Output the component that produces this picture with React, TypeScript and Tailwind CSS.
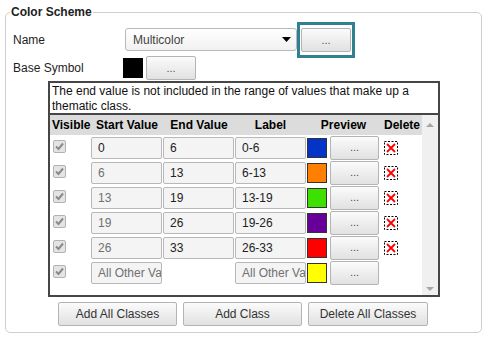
import React from "react";

type ClassRow = {
  start: string;
  end: string | null;
  label: string;
  color: string;
  canDelete: boolean;
  startLocked: boolean;
};

const classes: ClassRow[] = [
  { start: "0", end: "6", label: "0-6", color: "#0433c8", canDelete: true, startLocked: false },
  { start: "6", end: "13", label: "6-13", color: "#ff8000", canDelete: true, startLocked: true },
  { start: "13", end: "19", label: "13-19", color: "#3ee000", canDelete: true, startLocked: true },
  { start: "19", end: "26", label: "19-26", color: "#660099", canDelete: true, startLocked: true },
  { start: "26", end: "33", label: "26-33", color: "#ff0000", canDelete: true, startLocked: true },
  { start: "All Other Values", end: null, label: "All Other Values", color: "#ffff00", canDelete: false, startLocked: true },
];

const buttonClass =
  "flex items-center justify-center rounded-[2px] border border-[#b4b4b4] bg-linear-to-b from-[#fbfbfb] to-[#e1e1e1] text-[#333] shrink-0";

const fieldClass =
  "h-[22px] shrink-0 overflow-hidden whitespace-nowrap rounded-[2px] border border-[#b8b8b8] bg-[#f4f4f4] pl-[6px] leading-[20px]";

function Checkbox() {
  return (
    <svg width="13" height="13" viewBox="0 0 13 13">
      <rect x="0.5" y="0.5" width="12" height="12" rx="1.5" fill="#e4e4e4" stroke="#b2b2b2" />
      <path d="M3 6.5 L5.5 9 L10 3.5" fill="none" stroke="#8a8a8a" strokeWidth="2" />
    </svg>
  );
}

function DeleteIcon() {
  return (
    <svg width="14" height="14" viewBox="0 0 14 14">
      <rect x="0.5" y="0.5" width="13" height="13" fill="none" stroke="#000" strokeDasharray="2 1.5" />
      <path d="M3 3 L11 11 M11 3 L3 11" stroke="#ff0000" strokeWidth="1.8" />
    </svg>
  );
}

function DotsButton({ className }: { className: string }) {
  return <div className={`${buttonClass} ${className} text-[11px] text-[#555]`}>...</div>;
}

export default function App() {
  return (
    <div className="h-[339px] w-[483px] bg-white pl-[5px] pt-[12px] font-['Liberation_Sans',Arial,sans-serif] text-[12px] text-[#1e1e1e]">
      <div className="h-[321px] w-[477px] rounded-[5px] border border-[#cfcfcf]">
        <div className="-mt-[9px] ml-[4px] w-fit bg-white px-[1px] font-bold leading-[16px] text-[#222]">
          Color Scheme
        </div>

        {/* name row */}
        <div className="mt-[2px] flex h-[34px] items-start pl-[7px]">
          <div className="w-[112px] pt-[11px] leading-[14px]">Name</div>
          <div className="mt-[6px] flex h-[23px] w-[172px] shrink-0 items-center justify-between rounded-[3px] border border-[#b9b9b9] bg-linear-to-b from-white to-[#f1f1f1] pl-[7px] pr-[5px] text-[#444]">
            <span>Multicolor</span>
            <svg width="9" height="5" viewBox="0 0 9 5">
              <path d="M0 0 H9 L4.5 5 Z" fill="#000" />
            </svg>
          </div>
          <div className="flex h-[36px] w-[58px] shrink-0 items-center justify-center border-[3px] border-[#2f8191]">
            <DotsButton className="h-[24px] w-[50px]" />
          </div>
        </div>

        {/* base symbol row */}
        <div className="flex h-[24px] items-center pl-[7px]">
          <div className="w-[110px]">Base Symbol</div>
          <div className="h-[20px] w-[20px] shrink-0 bg-black" />
          <DotsButton className="ml-[3px] h-[24px] w-[50px]" />
        </div>

        {/* classes table */}
        <div className="ml-[42px] mt-[1px] flex h-[216px] w-[392px] flex-col border-2 border-[#464646]">
          <div className="h-[30px] px-[2px] pt-[1px] leading-[15px] text-[#111]">
            The end value is not included in the range of values that make up a thematic class.
          </div>
          <div className="h-[2px] bg-[#464646]" />
          <div className="flex flex-1">
            <div className="w-[372px]">
              <div className="flex h-[20px] items-center bg-[#dcdcdc] font-bold text-black">
                <div className="w-[41px] pl-[2px]">Visible</div>
                <div className="w-[72px] text-center">Start Value</div>
                <div className="w-[72px] text-center">End Value</div>
                <div className="w-[71px] text-center">Label</div>
                <div className="w-[75px] text-center">Preview</div>
                <div className="pl-[3px]">Delete</div>
              </div>
              {classes.map((row) => (
                <div key={row.label} className="flex h-[25px] items-center">
                  <div className="flex w-[41px] shrink-0 pl-[3px] -mt-[3px]">
                    <Checkbox />
                  </div>
                  <div className={`${fieldClass} w-[71px] ${row.startLocked ? "text-[#707070]" : "text-[#222]"}`}>
                    {row.start}
                  </div>
                  {row.end !== null ? (
                    <div className={`${fieldClass} ml-[1px] w-[71px] text-[#222]`}>{row.end}</div>
                  ) : (
                    <div className="ml-[1px] w-[71px] shrink-0" />
                  )}
                  <div className={`${fieldClass} ml-[1px] w-[71px] ${row.end === null ? "text-[#707070]" : "text-[#222]"}`}>
                    {row.label}
                  </div>
                  <div
                    className="ml-[1px] h-[20px] w-[20px] shrink-0 border border-[#333]"
                    style={{ backgroundColor: row.color }}
                  />
                  <DotsButton className="ml-[3px] h-[24px] w-[49px]" />
                  {row.canDelete && (
                    <div className="ml-[5px] flex">
                      <DeleteIcon />
                    </div>
                  )}
                </div>
              ))}
            </div>
            <div className="flex w-[16px] flex-col items-center justify-between bg-[#f0f0f0] pb-[4px] pt-[8px]">
              <svg width="8" height="4" viewBox="0 0 8 4">
                <path d="M0 4 H8 L4 0 Z" fill="#a6a6a6" />
              </svg>
              <svg width="8" height="4" viewBox="0 0 8 4">
                <path d="M0 0 H8 L4 4 Z" fill="#a6a6a6" />
              </svg>
            </div>
          </div>
        </div>

        {/* actions */}
        <div className="mt-[5px] flex gap-[6px] pl-[52px]">
          <div className={`${buttonClass} h-[24px] w-[119px]`}>Add All Classes</div>
          <div className={`${buttonClass} h-[24px] w-[119px]`}>Add Class</div>
          <div className={`${buttonClass} h-[24px] w-[120px]`}>Delete All Classes</div>
        </div>
      </div>
    </div>
  );
}
